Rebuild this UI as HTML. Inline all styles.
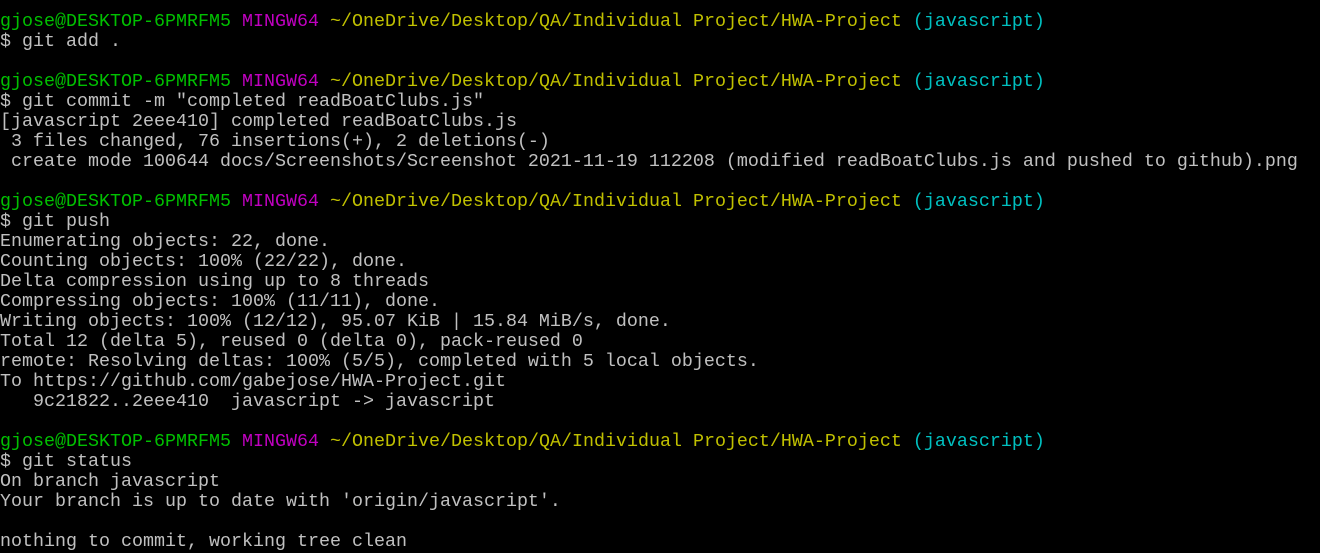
<!DOCTYPE html>
<html><head><meta charset="utf-8"><style>
html,body{margin:0;background:#000;width:1320px;height:553px;overflow:hidden}
pre{margin:0;padding:12px 0 0 0;font-family:"Liberation Mono",monospace;font-size:18.33px;line-height:20px;color:#c0c0c0;white-space:pre}
.g{color:#00c000}.m{color:#c000c0}.y{color:#c0c000}.c{color:#00c0c0}
</style></head><body><pre><span class="g">gjose@DESKTOP-6PMRFM5</span> <span class="m">MINGW64</span> <span class="y">~/OneDrive/Desktop/QA/Individual Project/HWA-Project</span> <span class="c">(javascript)</span>
$ git add .

<span class="g">gjose@DESKTOP-6PMRFM5</span> <span class="m">MINGW64</span> <span class="y">~/OneDrive/Desktop/QA/Individual Project/HWA-Project</span> <span class="c">(javascript)</span>
$ git commit -m "completed readBoatClubs.js"
[javascript 2eee410] completed readBoatClubs.js
 3 files changed, 76 insertions(+), 2 deletions(-)
 create mode 100644 docs/Screenshots/Screenshot 2021-11-19 112208 (modified readBoatClubs.js and pushed to github).png

<span class="g">gjose@DESKTOP-6PMRFM5</span> <span class="m">MINGW64</span> <span class="y">~/OneDrive/Desktop/QA/Individual Project/HWA-Project</span> <span class="c">(javascript)</span>
$ git push
Enumerating objects: 22, done.
Counting objects: 100% (22/22), done.
Delta compression using up to 8 threads
Compressing objects: 100% (11/11), done.
Writing objects: 100% (12/12), 95.07 KiB | 15.84 MiB/s, done.
Total 12 (delta 5), reused 0 (delta 0), pack-reused 0
remote: Resolving deltas: 100% (5/5), completed with 5 local objects.
To https://github.com/gabejose/HWA-Project.git
   9c21822..2eee410  javascript -&gt; javascript

<span class="g">gjose@DESKTOP-6PMRFM5</span> <span class="m">MINGW64</span> <span class="y">~/OneDrive/Desktop/QA/Individual Project/HWA-Project</span> <span class="c">(javascript)</span>
$ git status
On branch javascript
Your branch is up to date with 'origin/javascript'.

nothing to commit, working tree clean</pre></body></html>
